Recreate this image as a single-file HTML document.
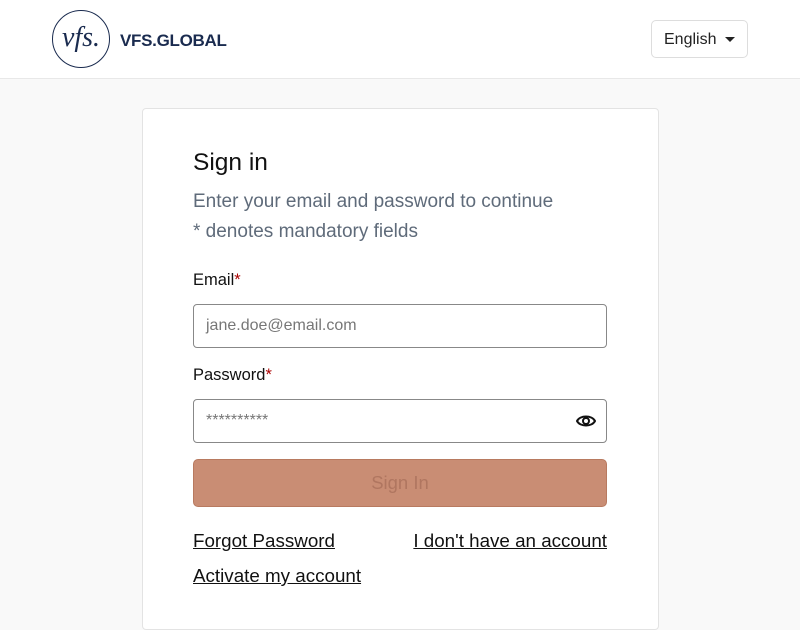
<!DOCTYPE html>
<html><head><meta charset="utf-8"><style>
body{margin:0;width:800px;height:600px;overflow:hidden;background:#f9f9f9;font-family:"Liberation Sans",sans-serif;position:relative}
.hdr{position:absolute;left:0;top:0;width:800px;height:78px;background:#fff;border-bottom:1px solid #e8e8e8}
.logo{position:absolute;left:52px;top:10px;width:58px;height:58px;border:1.5px solid #1a2b4f;border-radius:50%;box-sizing:border-box;text-align:center;line-height:54px;font-family:"Liberation Serif",serif;font-style:italic;font-size:28px;color:#1a2b4f}
.brand{position:absolute;left:120px;top:31px;font-size:17px;font-weight:bold;color:#1a2b4f;letter-spacing:-0.3px}
.lang{position:absolute;left:651px;top:20px;width:97px;height:38px;border:1px solid #ddd;border-radius:5px;box-sizing:border-box;font-size:16px;color:#222;line-height:37px;padding-left:12px}
.lang:after{content:"";position:absolute;right:12px;top:16px;border-left:5px solid transparent;border-right:5px solid transparent;border-top:5px solid #222}
.card{position:absolute;left:142px;top:108px;width:515px;height:520px;background:#fff;border:1px solid #e3e3e3;border-radius:4px}
.a{position:absolute;left:193px}
.inp{position:absolute;left:193px;width:414px;height:44px;border:1px solid #888;border-radius:4px;box-sizing:border-box;font-size:16px;color:#777;padding-left:12px;line-height:42px}
.u{text-decoration:underline;font-size:18.8px;color:#111}
</style></head><body>
<div class="hdr"><div class="logo">vfs.</div><div class="brand">VFS.GLOBAL</div><div class="lang">English</div></div>
<div class="card"></div>
<div class="a" style="top:149px;font-size:24.5px;color:#111">Sign in</div>
<div class="a" style="top:191px;font-size:19px;color:#5f6b7a">Enter your email and password to continue</div>
<div class="a" style="top:221px;font-size:19px;color:#5f6b7a">* denotes mandatory fields</div>
<div class="a" style="top:271px;font-size:16.5px;color:#111">Email<span style="color:#a00">*</span></div>
<div class="inp" style="top:304px">jane.doe@email.com</div>
<div class="a" style="top:366px;font-size:16.5px;color:#111">Password<span style="color:#a00">*</span></div>
<div class="inp" style="top:399px">**********
<svg style="position:absolute;right:10px;top:12px" width="20" height="18" viewBox="0 0 20 18"><path d="M1 9C4 3 16 3 19 9C16 15 4 15 1 9Z" fill="none" stroke="#111" stroke-width="2"/><circle cx="10" cy="9" r="3" fill="none" stroke="#111" stroke-width="2"/></svg></div>
<div style="position:absolute;left:193px;top:459px;width:414px;height:48px;background:#c98d74;border-radius:5px;border:1px solid #b87a60;box-sizing:border-box;text-align:center;line-height:46px;font-size:18.5px;color:#b07660">Sign In</div>
<div class="a u" style="top:530px">Forgot Password</div>
<div class="u" style="position:absolute;right:193px;top:530px">I don't have an account</div>
<div class="a u" style="top:565px">Activate my account</div>
</body></html>
